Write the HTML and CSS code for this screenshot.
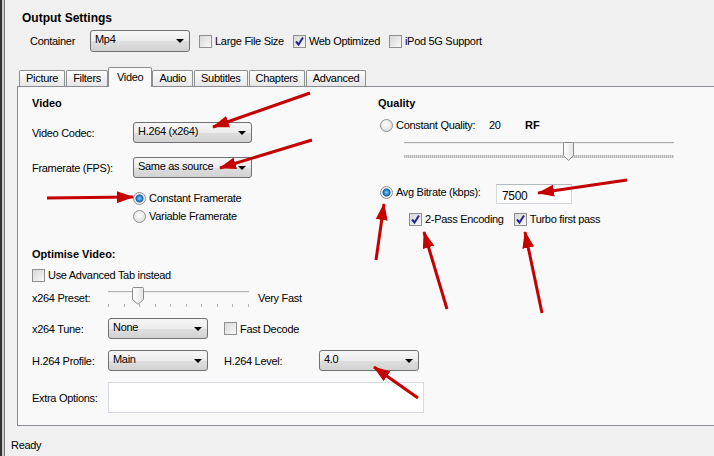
FILE: index.html
```html
<!DOCTYPE html>
<html lang="en">

<head>
    <meta charset="UTF-8">
    <meta name="viewport" content="width=device-width, initial-scale=1.0">
    <title>Output Settings</title>
    <link rel="stylesheet" href="styles.css">
</head>

<body>
    <div class="window">
        <h2 class="heading">Output Settings</h2>
        <div class="container-row">
            <span class="container-lbl">Container</span>
            <div class="select sel-container">Mp4</div>
            <label class="check top-check"><span class="box"></span>Large File Size</label>
            <label class="check top-check"><span class="box"><svg width="11" height="11" viewBox="0 0 11 11"><path d="M2 5.5 L4.5 8.5 L9 1.5" fill="none" stroke="#25258f" stroke-width="2"/></svg></span>Web Optimized</label>
            <label class="check top-check"><span class="box"></span>iPod 5G Support</label>
        </div>

        <ul class="tabs">
            <li class="tab">Picture</li>
            <li class="tab">Filters</li>
            <li class="tab active">Video</li>
            <li class="tab">Audio</li>
            <li class="tab">Subtitles</li>
            <li class="tab">Chapters</li>
            <li class="tab">Advanced</li>
        </ul>

        <div class="panel">
            <div class="top">
                <div class="col-video">
                    <div class="title">Video</div>
                    <div class="field codec-row">
                        <span class="lbl-video">Video Codec:</span>
                        <div class="select sel-video">H.264 (x264)</div>
                    </div>
                    <div class="field fps-row">
                        <span class="lbl-video">Framerate (FPS):</span>
                        <div class="select sel-video">Same as source</div>
                    </div>
                    <label class="opt cfr-row"><span class="radio on"></span>Constant Framerate</label>
                    <label class="opt vfr-row"><span class="radio"></span>Variable Framerate</label>
                </div>

                <div class="col-quality">
                    <div class="title">Quality</div>
                    <div class="opt cq-row">
                        <span class="radio"></span>
                        <span class="cq-text">Constant Quality:</span>
                        <span class="cq-value">20</span>
                        <b>RF</b>
                    </div>
                    <div class="q-slider">
                        <div class="q-track"></div>
                        <div class="q-ticks"></div>
                        <svg class="q-thumb" width="11" height="19" viewBox="0 0 11 19">
                            <defs>
                                <linearGradient id="thumbfill" x1="0" y1="0" x2="1" y2="0">
                                    <stop offset="0" stop-color="#ffffff"/>
                                    <stop offset="1" stop-color="#e4e4e4"/>
                                </linearGradient>
                            </defs>
                            <path d="M0.5 1.5 Q0.5 0.5 1.5 0.5 H9.5 Q10.5 0.5 10.5 1.5 V13.5 L5.5 18.3 L0.5 13.5 Z" fill="url(#thumbfill)" stroke="#8b8b8b"/>
                        </svg>
                    </div>
                    <div class="bitrate-row">
                        <label class="opt bitrate-opt"><span class="radio on"></span>Avg Bitrate (kbps):</label>
                        <div class="input bitrate-input">7500</div>
                    </div>
                    <div class="pass-row">
                        <label class="check"><span class="box"><svg width="11" height="11" viewBox="0 0 11 11"><path d="M2 5.5 L4.5 8.5 L9 1.5" fill="none" stroke="#25258f" stroke-width="2"/></svg></span>2-Pass Encoding</label>
                        <label class="check turbo"><span class="box"><svg width="11" height="11" viewBox="0 0 11 11"><path d="M2 5.5 L4.5 8.5 L9 1.5" fill="none" stroke="#25258f" stroke-width="2"/></svg></span>Turbo first pass</label>
                    </div>
                </div>
            </div>

            <div class="optimise">
                <div class="title">Optimise Video:</div>
                <label class="check adv-row"><span class="box"></span>Use Advanced Tab instead</label>
                <div class="field preset-row">
                    <span class="lbl-opt">x264 Preset:</span>
                    <div class="p-slider">
                        <div class="p-track"></div>
                        <div class="p-ticks">
                            <span></span><span></span><span></span><span></span><span></span>
                            <span></span><span></span><span></span><span></span><span></span>
                        </div>
                        <svg class="p-thumb" width="12" height="18" viewBox="0 0 12 18">
                            <path d="M0.5 1.5 Q0.5 0.5 1.5 0.5 H10.5 Q11.5 0.5 11.5 1.5 V12.5 L6 17.3 L0.5 12.5 Z" fill="url(#thumbfill)" stroke="#8b8b8b"/>
                        </svg>
                    </div>
                    <span class="preset-name">Very Fast</span>
                </div>
                <div class="field tune-row">
                    <span class="lbl-opt">x264 Tune:</span>
                    <div class="select sel-opt">None</div>
                    <label class="check fast-decode"><span class="box"></span>Fast Decode</label>
                </div>
                <div class="field profile-row">
                    <span class="lbl-opt">H.264 Profile:</span>
                    <div class="select sel-opt">Main</div>
                    <span class="lbl-level">H.264 Level:</span>
                    <div class="select sel-opt">4.0</div>
                </div>
                <div class="field extra-row">
                    <span class="lbl-opt">Extra Options:</span>
                    <div class="input extra-input"></div>
                </div>
            </div>
        </div>

        <div class="status">Ready</div>

        <svg class="arrows" width="714" height="456" viewBox="0 0 714 456">
            <defs>
                <marker id="head" markerUnits="userSpaceOnUse" markerWidth="17" markerHeight="12" refX="16" refY="6" orient="auto">
                    <path d="M0 0 L17 6 L0 12 Z" fill="#c40000"/>
                </marker>
            </defs>
            <g stroke="#c40000" stroke-width="3" marker-end="url(#head)">
                <line x1="310" y1="93" x2="213" y2="127"/>
                <line x1="312" y1="140" x2="220" y2="168"/>
                <line x1="47" y1="198" x2="133" y2="197"/>
                <line x1="627" y1="180" x2="538" y2="193"/>
                <line x1="376" y1="260" x2="384" y2="204"/>
                <line x1="447" y1="309" x2="424" y2="232"/>
                <line x1="542" y1="313" x2="525" y2="232"/>
                <line x1="418" y1="398" x2="374" y2="367"/>
            </g>
        </svg>
    </div>
</body>

</html>
```

FILE: styles.css
```css
* {
    margin: 0;
    padding: 0;
    box-sizing: border-box;
}

html,
body {
    width: 714px;
    height: 456px;
    overflow: hidden;
}

body {
    background: #f0f0f0;
    font-family: "Liberation Sans", Arial, sans-serif;
    font-size: 11px;
    letter-spacing: -0.3px;
    color: #000;
}

b,
.heading,
.title {
    letter-spacing: 0;
}

.window {
    position: relative;
    width: 714px;
    height: 456px;
    padding-top: 11px;
    overflow: hidden;
    box-shadow: inset 2px 0 0 #333, inset 4px 0 0 #c9c9c9, inset 5px 0 0 #7a7a7a;
}

.heading {
    font-size: 12px;
    font-weight: bold;
    line-height: 14px;
    margin-left: 22px;
}

.container-row {
    display: flex;
    align-items: center;
    height: 22px;
    margin-top: 5px;
    padding-left: 30px;
}

.container-lbl {
    width: 60px;
}

/* dropdowns */
.select {
    position: relative;
    flex: none;
    height: 21px;
    border: 1px solid #707070;
    border-radius: 3px;
    background: linear-gradient(#f7f7f7, #ececec 50%, #dedede 52%, #d2d2d2);
    padding-left: 4px;
    line-height: 17px;
}

.select::after {
    content: '';
    position: absolute;
    right: 5px;
    top: 8px;
    border-left: 4px solid transparent;
    border-right: 4px solid transparent;
    border-top: 4px solid #000;
}

.sel-container {
    width: 100px;
    height: 22px;
}

.sel-video {
    width: 119px;
}

.sel-opt {
    width: 100px;
}

/* checkboxes and radios */
.check,
.opt {
    display: flex;
    align-items: center;
    gap: 3px;
    white-space: nowrap;
}

.top-check {
    margin-left: 9px;
}

.box {
    flex: none;
    width: 13px;
    height: 13px;
    border: 1px solid #8f8f8f;
    background: linear-gradient(135deg, #d8d8d8, #f8f8f8);
    display: flex;
    align-items: center;
    justify-content: center;
}

.box svg {
    display: block;
}

.radio {
    flex: none;
    width: 13px;
    height: 13px;
    border-radius: 50%;
    border: 1px solid #8e8f8f;
    background: radial-gradient(circle at 45% 40%, #ffffff, #d4d4d4);
}

.radio.on {
    background: radial-gradient(circle at 50% 50%, #7fd0fa 0, #2b86d0 2.5px, #1a5f9e 3.5px, #eaeaea 4.5px, #ffffff 6px);
}

/* tabs */
.tabs {
    display: flex;
    align-items: flex-end;
    list-style: none;
    height: 19px;
    margin: 15px 0 0 19px;
}

.tab {
    height: 16px;
    line-height: 15px;
    padding: 0 6px;
    margin-right: 1px;
    border: 1px solid #8c9093;
    border-bottom: none;
    border-radius: 2px 2px 0 0;
    background: linear-gradient(#fdfdfd, #e6e6e6);
}

.tab.active {
    position: relative;
    z-index: 1;
    height: 20px;
    line-height: 18px;
    padding: 0 8px;
    margin: 0 0 -1px -1px;
    background: #f9f9f9;
}

.panel {
    width: 720px;
    height: 340px;
    margin-left: 17px;
    border: 1px solid #898c95;
    background: #f9f9f9;
    padding: 9px 0 0 14px;
}

.top {
    display: flex;
    height: 151px;
}

.col-video {
    width: 346px;
}

.col-quality {
    flex: 1;
}

.title {
    font-weight: bold;
    height: 14px;
    line-height: 14px;
}

.field {
    display: flex;
    align-items: center;
    height: 21px;
}

.lbl-video {
    width: 101px;
}

.codec-row {
    margin-top: 12px;
}

.fps-row {
    margin-top: 14px;
}

.cfr-row {
    height: 16px;
    margin-top: 12px;
    padding-left: 101px;
}

.vfr-row {
    height: 16px;
    margin-top: 2px;
    padding-left: 101px;
}

/* quality column */
.cq-row {
    height: 16px;
    margin-top: 7px;
    padding-left: 2px;
}

.cq-text {
    width: 90px;
}

.cq-value {
    width: 33px;
}

.q-slider {
    position: relative;
    width: 270px;
    height: 22px;
    margin: 9px 0 0 26px;
}

.q-track {
    margin-top: 5px;
    height: 2px;
    border-top: 1px solid #a9a9a9;
    border-bottom: 1px solid #ececec;
}

.q-ticks {
    margin-top: 11px;
    height: 3px;
    background: repeating-linear-gradient(90deg, #b9b9b9 0 1px, #d6d6d6 1px 2px);
}

.q-thumb {
    position: absolute;
    left: 159px;
    top: 0;
}

.bitrate-row {
    display: flex;
    align-items: center;
    height: 20px;
    margin-top: 20px;
}

.bitrate-opt {
    width: 118px;
    padding-left: 2px;
    margin-bottom: 4px;
}

.input {
    background: #fff;
    border: 1px solid #d2d7de;
    border-top-color: #b4b9c0;
}

.bitrate-input {
    width: 76px;
    height: 20px;
    line-height: 18px;
    padding: 2px 0 0 5px;
    font-size: 12px;
}

.pass-row {
    display: flex;
    align-items: center;
    height: 16px;
    margin-top: 7px;
    padding-left: 31px;
}

.turbo {
    margin-left: 10px;
}

/* optimise section */
.adv-row {
    height: 16px;
    margin-top: 6px;
}

.lbl-opt {
    width: 76px;
}

.preset-row {
    height: 23px;
    margin-top: 3px;
}

.p-slider {
    position: relative;
    width: 141px;
    height: 23px;
}

.p-track {
    margin-top: 5px;
    height: 2px;
    border-top: 1px solid #b3b3b3;
    border-bottom: 1px solid #ececec;
}

.p-ticks {
    display: flex;
    justify-content: space-between;
    margin-top: 11px;
}

.p-ticks span {
    width: 1px;
    height: 3px;
    background: #b5b5b5;
}

.p-thumb {
    position: absolute;
    left: 24px;
    top: 1px;
}

.preset-name {
    margin-left: 9px;
}

.tune-row {
    margin-top: 9px;
}

.fast-decode {
    margin-left: 16px;
}

.profile-row {
    margin-top: 11px;
}

.lbl-level {
    width: 95px;
    margin-left: 16px;
}

.extra-row {
    height: 31px;
    margin-top: 11px;
}

.extra-input {
    width: 316px;
    height: 31px;
    border-color: #d5dae2;
}

.status {
    margin-top: 12px;
    padding-left: 11px;
    line-height: 14px;
}

.arrows {
    position: absolute;
    left: 0;
    top: 0;
    pointer-events: none;
}
```
